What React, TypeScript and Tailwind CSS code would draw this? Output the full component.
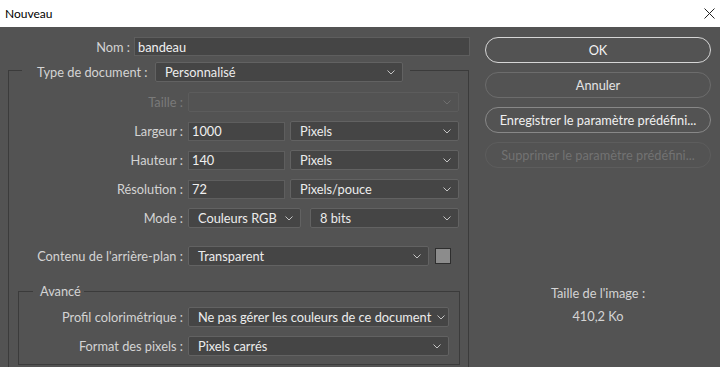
import type { ReactNode } from 'react'

function Chevron({ dim = false }: { dim?: boolean }) {
  return (
    <svg width="8" height="5" viewBox="0 0 8 5" className="shrink-0">
      <path d="M0.5 0.5 L4 4 L7.5 0.5" fill="none" stroke={dim ? '#6f6f6f' : '#c4c4c4'} strokeWidth="1" />
    </svg>
  )
}

function Select({ value, className = '', disabled = false }: { value?: string; className?: string; disabled?: boolean }) {
  return (
    <div
      className={`flex h-[20px] shrink-0 items-center justify-between gap-[6px] rounded-[2px] border pl-[9px] pr-[7px] ${
        disabled ? 'border-[#5c5c5c] bg-[#535353]' : 'border-[#626262] bg-[#454545] text-[#ececec]'
      } ${className}`}
    >
      <span className="whitespace-nowrap leading-[16px]">{value}</span>
      <Chevron dim={disabled} />
    </div>
  )
}

function Field({ value, className = '' }: { value: string; className?: string }) {
  return (
    <div className={`flex h-[19px] shrink-0 items-center border border-[#5e5e5e] bg-[#454545] pl-[3px] leading-[16px] text-[#f0f0f0] ${className}`}>
      {value}
    </div>
  )
}

function Row({ label, width, children, dim = false, className = '' }: { label: string; width: string; children: ReactNode; dim?: boolean; className?: string }) {
  return (
    <div className={`flex h-[20px] items-center ${className}`}>
      <span className={`${width} shrink-0 whitespace-nowrap text-right leading-[16px] ${dim ? 'text-[#7a7a7a]' : 'text-[#d4d4d4]'}`}>{label}</span>
      <div className="ml-[5px] flex items-center">{children}</div>
    </div>
  )
}

function Button({ children, tone }: { children: ReactNode; tone: 'primary' | 'normal' | 'light' | 'disabled' }) {
  const styles = {
    primary: 'border-[#d6d6d6] text-[#f2f2f2]',
    normal: 'border-[#6c6c6c] text-[#e4e4e4]',
    light: 'border-[#888888] text-[#f0f0f0]',
    disabled: 'border-[#5d5d5d] text-[#727272]',
  }
  return (
    <div className={`flex h-[26px] items-center justify-center whitespace-nowrap rounded-full border leading-[16px] ${styles[tone]}`}>
      {children}
    </div>
  )
}

export default function App() {
  return (
    <div className="h-[367px] w-[720px] overflow-hidden bg-[#535353] font-['Lato',sans-serif] text-[12.8px] leading-none">
      <div className="flex h-[27px] items-center justify-between bg-white pl-[5px] pr-[5px] text-[12px] leading-[16px] text-black">
        <span>Nouveau</span>
        <svg width="11" height="11" viewBox="0 0 11 11">
          <path d="M0.5 0.5 L10.5 10.5 M10.5 0.5 L0.5 10.5" stroke="#222" strokeWidth="1" />
        </svg>
      </div>

      <div className="flex">
        <div className="w-[470px] shrink-0">
          <div className="mt-[10px] flex h-[19px] items-center">
            <span className="w-[130px] text-right leading-[16px] text-[#d4d4d4]">Nom :</span>
            <Field value="bandeau" className="ml-[4px] w-[336px]" />
          </div>

          <fieldset className="ml-[8px] mt-[2px] w-[461px] border border-[#3b3b3b] pb-[40px]">
            <legend className="ml-[13px] pl-[15px] pr-[7px] pt-[4px]">
              <div className="flex items-center">
                <span className="w-[113px] whitespace-nowrap leading-[16px] text-[#d4d4d4]">Type de document :</span>
                <Select value="Personnalisé" className="ml-[5px] w-[248px]" />
              </div>
            </legend>

            <Row label="Taille :" width="w-[174px]" dim className="mt-[10px]">
              <Select disabled className="w-[271px]" />
            </Row>
            <Row label="Largeur :" width="w-[174px]" className="mt-[9px]">
              <Field value="1000" className="w-[97px]" />
              <Select value="Pixels" className="ml-[5px] w-[169px]" />
            </Row>
            <Row label="Hauteur :" width="w-[174px]" className="mt-[9px]">
              <Field value="140" className="w-[97px]" />
              <Select value="Pixels" className="ml-[5px] w-[169px]" />
            </Row>
            <Row label="Résolution :" width="w-[174px]" className="mt-[9px]">
              <Field value="72" className="w-[97px]" />
              <Select value="Pixels/pouce" className="ml-[5px] w-[169px]" />
            </Row>
            <Row label="Mode :" width="w-[174px]" className="mt-[9px]">
              <Select value="Couleurs RGB" className="w-[113px]" />
              <Select value="8 bits" className="ml-[9px] w-[149px]" />
            </Row>
            <Row label="Contenu de l'arrière-plan :" width="w-[174px]" className="mt-[18px]">
              <Select value="Transparent" className="w-[241px]" />
              <div className="ml-[6px] h-[16px] w-[16px] border border-[#2e2e2e] bg-[#8c8c8c]" />
            </Row>

            <fieldset className="ml-[9px] mt-[17px] w-[442px] border border-[#3b3b3b] pb-[8px]">
              <legend className="ml-[14px] h-[16px] pl-[7px] pr-[3px] leading-[16px] text-[#d4d4d4]">Avancé</legend>
              <Row label="Profil colorimétrique :" width="w-[164px]" className="mt-[8px]">
                <Select value="Ne pas gérer les couleurs de ce document" className="w-[261px]" />
              </Row>
              <Row label="Format des pixels :" width="w-[164px]" className="mt-[9px]">
                <Select value="Pixels carrés" className="w-[261px]" />
              </Row>
            </fieldset>
          </fieldset>
        </div>

        <div className="ml-[15px] mt-[10px] w-[226px]">
          <div className="flex flex-col gap-[9px]">
            <Button tone="primary">OK</Button>
            <Button tone="normal">Annuler</Button>
            <Button tone="light">Enregistrer le paramètre prédéfini...</Button>
            <Button tone="disabled">Supprimer le paramètre prédéfini...</Button>
          </div>
          <div className="mt-[117px] text-center leading-[16px] text-[#d4d4d4]">Taille de l'image :</div>
          <div className="mt-[7px] text-center leading-[16px] text-[#d4d4d4]">410,2 Ko</div>
        </div>
      </div>
    </div>
  )
}
